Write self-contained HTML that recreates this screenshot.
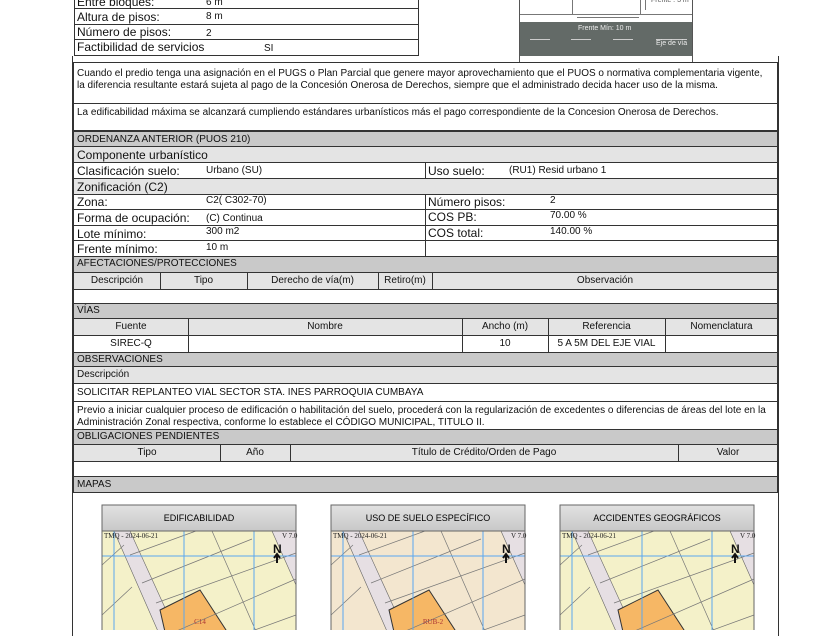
<!DOCTYPE html>
<html><head><meta charset="utf-8"><style>
*{margin:0;padding:0;box-sizing:border-box}
body{width:840px;height:630px;overflow:hidden;background:#fff;font-family:"Liberation Sans",Arial,sans-serif;color:#111;position:relative}
.a{position:absolute}
.r{position:absolute;left:73px;width:705px;border:1px solid #333;border-top:none;font-size:10px;line-height:1}
.g{background:#c9c9c9}
.l{background:#e4e4e4}
.t{position:absolute;white-space:nowrap}
.c{position:absolute;top:0;bottom:0;border-left:1px solid #333}
.ct{position:absolute;text-align:center;white-space:nowrap;font-size:10px}
</style></head><body>
<div class="a" style="left:74px;top:-1px;width:345px;height:57px;border:1px solid #333"></div>
<div class="a" style="left:74px;top:8px;width:345px;border-top:1px solid #333"></div>
<div class="a" style="left:74px;top:24px;width:345px;border-top:1px solid #333"></div>
<div class="a" style="left:74px;top:39px;width:345px;border-top:1px solid #333"></div>
<div class="t" style="left:77px;top:-5px;font-size:12px">Entre bloques:</div><div class="t" style="left:206px;top:-3px;font-size:10px">6 m</div>
<div class="t" style="left:77px;top:10px;font-size:12px">Altura de pisos:</div><div class="t" style="left:206px;top:11px;font-size:10px">8 m</div>
<div class="t" style="left:77px;top:25px;font-size:12px">Número de pisos:</div><div class="t" style="left:206px;top:28px;font-size:10px">2</div>
<div class="t" style="left:77px;top:40px;font-size:12px">Factibilidad de servicios</div><div class="t" style="left:264px;top:43px;font-size:10px">SI</div>
<div class="a" style="left:519px;top:-1px;width:174px;height:64px;border:1px solid #555;background:#fff"></div>
<div class="a" style="left:572px;top:0;height:14px;border-left:1px solid #777"></div>
<div class="a" style="left:640px;top:0;height:14px;border-left:1px solid #777"></div>
<div class="a" style="left:520px;top:14px;width:172px;border-top:1px solid #777"></div>
<div class="a" style="left:577px;top:17px;width:62px;border-top:1px solid #777"></div>
<div class="a" style="left:645px;top:0;height:10px;border-left:1px solid #777"></div>
<div class="t" style="left:651px;top:-3px;font-size:7px;color:#555">Frente : 3 m</div>
<div class="a" style="left:520px;top:22px;width:172px;height:34px;background:#636a67"></div>
<div class="t" style="left:578px;top:25px;font-size:7px;color:#eee">Frente Mín: 10 m</div>
<div class="a" style="left:530px;top:39px;width:20px;border-top:1px solid #ccc"></div>
<div class="a" style="left:571px;top:39px;width:20px;border-top:1px solid #ccc"></div>
<div class="a" style="left:613px;top:39px;width:20px;border-top:1px solid #ccc"></div>
<div class="t" style="left:656px;top:39px;font-size:7px;color:#eee;border-top:1px solid #ccc">Eje de vía</div>
<div class="a" style="left:72px;top:56px;width:707px;height:580px;border-left:1px solid #333;border-right:1px solid #333"></div>
<div class="r" style="top:62px;height:42px;border-top:1px solid #333"><div class="t" style="left:3px;top:5px;line-height:12px">Cuando el predio tenga una asignación en el PUGS o Plan Parcial que genere mayor aprovechamiento que el PUOS o normativa complementaria vigente,<br>la diferencia resultante estará sujeta al pago de la Concesión Onerosa de Derechos, siempre que el administrado decida hacer uso de la misma.</div></div>
<div class="r" style="top:104px;height:27px"><div class="t" style="left:3px;top:4px">La edificabilidad máxima se alcanzará cumpliendo estándares urbanísticos más el pago correspondiente de la Concesion Onerosa de Derechos.</div></div>
<div class="r g" style="top:131px;height:16px;border-top:1px solid #333"><div class="t" style="left:3px;top:3px">ORDENANZA ANTERIOR (PUOS 210)</div></div>
<div class="r l" style="top:147px;height:16px"><div class="t" style="left:3px;top:2px;font-size:12px">Componente urbanístico</div></div>
<div class="r" style="top:163px;height:16px"><div class="t" style="left:3px;top:2px;font-size:12px">Clasificación suelo:</div><div class="t" style="left:132px;top:3px">Urbano (SU)</div><div class="c" style="left:351px"></div><div class="t" style="left:354px;top:2px;font-size:12px">Uso suelo:</div><div class="t" style="left:435px;top:3px">(RU1) Resid urbano 1</div></div>
<div class="r l" style="top:179px;height:16px"><div class="t" style="left:3px;top:2px;font-size:12px">Zonificación (C2)</div></div>
<div class="r" style="top:195px;height:15px"><div class="t" style="left:3px;top:1px;font-size:12px">Zona:</div><div class="t" style="left:132px;top:1px">C2( C302-70)</div><div class="c" style="left:351px"></div><div class="t" style="left:354px;top:1px;font-size:12px">Número pisos:</div><div class="t" style="left:476px;top:1px">2</div></div>
<div class="r" style="top:210px;height:16px"><div class="t" style="left:3px;top:2px;font-size:12px">Forma de ocupación:</div><div class="t" style="left:132px;top:4px">(C) Continua</div><div class="c" style="left:351px"></div><div class="t" style="left:354px;top:1px;font-size:12px">COS PB:</div><div class="t" style="left:476px;top:1px">70.00 %</div></div>
<div class="r" style="top:226px;height:15px"><div class="t" style="left:3px;top:2px;font-size:12px">Lote mínimo:</div><div class="t" style="left:132px;top:1px">300 m2</div><div class="c" style="left:351px"></div><div class="t" style="left:354px;top:1px;font-size:12px">COS total:</div><div class="t" style="left:476px;top:1px">140.00 %</div></div>
<div class="r" style="top:241px;height:16px"><div class="t" style="left:3px;top:2px;font-size:12px">Frente mínimo:</div><div class="t" style="left:132px;top:2px">10 m</div><div class="c" style="left:351px"></div></div>
<div class="r g" style="top:257px;height:16px"><div class="t" style="left:3px;top:2px">AFECTACIONES/PROTECCIONES</div></div>
<div class="r l" style="top:273px;height:17px"><div class="ct" style="left:0;width:86px;top:3px">Descripción</div><div class="c" style="left:86px"></div><div class="ct" style="left:86px;width:87px;top:3px">Tipo</div><div class="c" style="left:173px"></div><div class="ct" style="left:173px;width:131px;top:3px">Derecho de vía(m)</div><div class="c" style="left:304px"></div><div class="ct" style="left:304px;width:54px;top:3px">Retiro(m)</div><div class="c" style="left:358px"></div><div class="ct" style="left:358px;width:346px;top:3px">Observación</div></div>
<div class="r" style="top:290px;height:14px"></div>
<div class="r g" style="top:304px;height:15px"><div class="t" style="left:3px;top:2px">VÍAS</div></div>
<div class="r l" style="top:319px;height:17px"><div class="ct" style="left:0;width:114px;top:3px">Fuente</div><div class="c" style="left:114px"></div><div class="ct" style="left:114px;width:274px;top:3px">Nombre</div><div class="c" style="left:388px"></div><div class="ct" style="left:388px;width:86px;top:3px">Ancho (m)</div><div class="c" style="left:474px"></div><div class="ct" style="left:474px;width:117px;top:3px">Referencia</div><div class="c" style="left:591px"></div><div class="ct" style="left:591px;width:113px;top:3px">Nomenclatura</div></div>
<div class="r" style="top:336px;height:17px"><div class="ct" style="left:0;width:114px;top:3px">SIREC-Q</div><div class="c" style="left:114px"></div><div class="c" style="left:388px"></div><div class="ct" style="left:388px;width:86px;top:3px">10</div><div class="c" style="left:474px"></div><div class="ct" style="left:474px;width:117px;top:3px">5 A 5M DEL EJE VIAL</div><div class="c" style="left:591px"></div></div>
<div class="r g" style="top:353px;height:14px"><div class="t" style="left:3px;top:2px">OBSERVACIONES</div></div>
<div class="r l" style="top:367px;height:17px"><div class="t" style="left:3px;top:3px">Descripción</div></div>
<div class="r" style="top:384px;height:18px"><div class="t" style="left:3px;top:4px">SOLICITAR REPLANTEO VIAL SECTOR STA. INES PARROQUIA CUMBAYA</div></div>
<div class="r" style="top:402px;height:28px"><div class="t" style="left:3px;top:3px;line-height:12px">Previo a iniciar cualquier proceso de edificación o habilitación del suelo, procederá con la regularización de excedentes o diferencias de áreas del lote en la<br>Administración Zonal respectiva, conforme lo establece el CÓDIGO MUNICIPAL, TITULO II.</div></div>
<div class="r g" style="top:430px;height:15px"><div class="t" style="left:3px;top:2px">OBLIGACIONES PENDIENTES</div></div>
<div class="r l" style="top:445px;height:17px"><div class="ct" style="left:0;width:146px;top:3px">Tipo</div><div class="c" style="left:146px"></div><div class="ct" style="left:146px;width:70px;top:3px">Año</div><div class="c" style="left:216px"></div><div class="ct" style="left:216px;width:388px;top:3px">Título de Crédito/Orden de Pago</div><div class="c" style="left:604px"></div><div class="ct" style="left:604px;width:100px;top:3px">Valor</div></div>
<div class="r" style="top:462px;height:15px"></div>
<div class="r g" style="top:477px;height:16px"><div class="t" style="left:3px;top:3px">MAPAS</div></div>

<svg class="a" style="left:0;top:0" width="840" height="630" font-family="Liberation Serif,serif">
<defs>
<linearGradient id="hg" x1="0" y1="0" x2="0" y2="1"><stop offset="0" stop-color="#e2e2e2"/><stop offset="1" stop-color="#c8c8c8"/></linearGradient>
<g id="m">
<rect x="0" y="0" width="194" height="26" fill="url(#hg)" stroke="#666"/>
<polygon points="12,26 28,26 80,140 62,140" fill="#e6dfe3" stroke="#666" stroke-width="0.6"/>
<polygon points="170,26 194,26 194,80" fill="#e6dfe3" stroke="#666" stroke-width="0.6"/>
<polygon points="58,105 98,85 124,125 130,140 66,140" fill="#f6b765" stroke="#333" stroke-width="1"/>
<path d="M0,60 L22,40 M28,50 L94,26 M40,78 L150,34 M54,98 L194,48 M70,128 L194,74 M110,26 L160,140 M0,110 L30,82 M150,126 L194,110" stroke="#777" stroke-width="0.7" fill="none"/>
<path d="M12,26V140 M82,26V140 M152,26V140 M0,51H194 M0,126H194" stroke="#5aa7f0" stroke-width="1" fill="none"/>
<rect x="0" y="26" width="194" height="110" fill="none" stroke="#666"/>
<text x="2" y="33" font-size="7" fill="#222">TMQ - 2024-06-21</text>
<text x="180" y="33" font-size="7" fill="#222">V 7.0</text>
<text x="171" y="48" font-size="12" font-weight="bold" font-family="Liberation Sans" fill="#111">N</text>
<path d="M175,58 L175,50 M172,53 L175,49 L178,53" stroke="#111" stroke-width="2" fill="none"/>
</g>
</defs>
<g transform="translate(102,505)"><rect x="0" y="26" width="194" height="110" fill="#f4f1c9"/><use href="#m"/><text x="97" y="16" font-size="9" text-anchor="middle" font-family="Liberation Sans">EDIFICABILIDAD</text><text x="98" y="119" font-size="7" fill="#a33" text-anchor="middle">C14</text></g>
<g transform="translate(331,505)"><rect x="0" y="26" width="194" height="110" fill="#f3e6cf"/><use href="#m"/><text x="97" y="16" font-size="9" text-anchor="middle" font-family="Liberation Sans">USO DE SUELO ESPECÍFICO</text><text x="102" y="119" font-size="7" fill="#a33" text-anchor="middle">RUB-2</text></g>
<g transform="translate(560,505)"><rect x="0" y="26" width="194" height="110" fill="#f4f1c9"/><use href="#m"/><text x="97" y="16" font-size="9" text-anchor="middle" font-family="Liberation Sans">ACCIDENTES GEOGRÁFICOS</text></g>
</svg>
</body></html>
